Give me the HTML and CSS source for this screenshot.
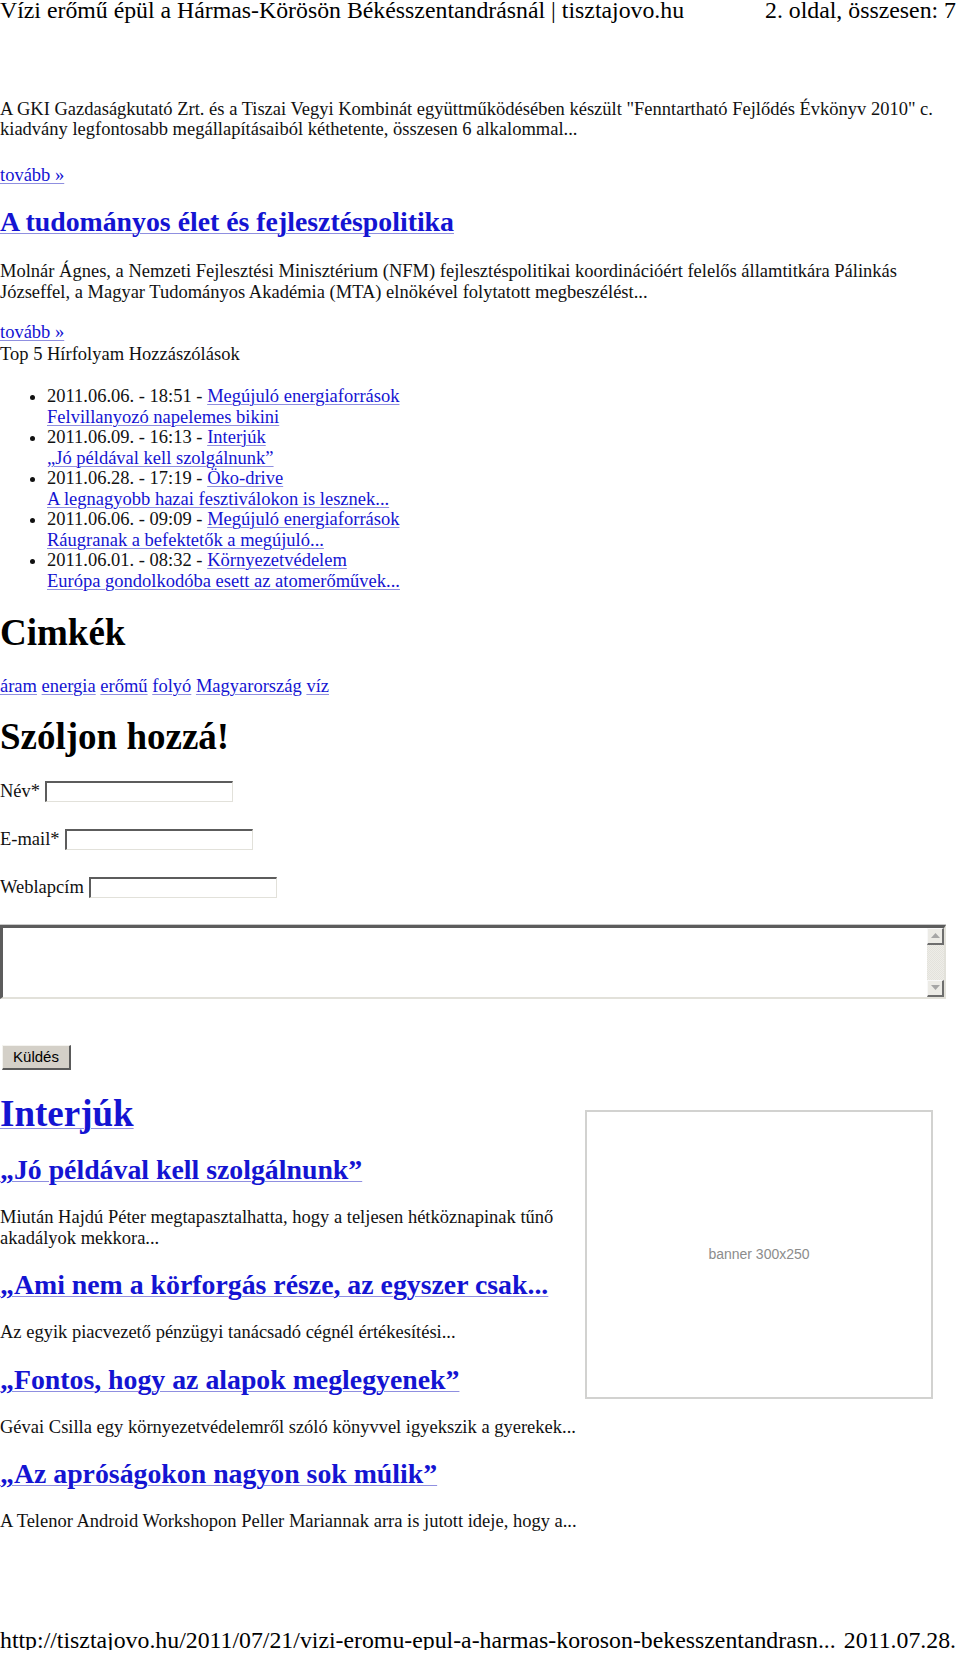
FILE: index.html
```html
<!DOCTYPE html>
<html lang="hu">
<head>
  <meta charset="UTF-8" />
  <title>Vízi erőmű épül a Hármas-Körösön Békésszentandrásnál | tisztajovo.hu</title>
  <link rel="stylesheet" href="styles.css">
</head>
<body>
  <div class="page-head">
    <span>Vízi erőmű épül a Hármas-Körösön Békésszentandrásnál | tisztajovo.hu</span>
    <span>2. oldal, összesen: 7</span>
  </div>

  <div class="main">
    <p class="lead first">A GKI Gazdaságkutató Zrt. és a Tiszai Vegyi Kombinát együttműködésében készült "Fenntartható Fejlődés Évkönyv 2010" c. kiadvány legfontosabb megállapításaiból kéthetente, összesen 6 alkalommal...</p>
    <p class="more more-1"><a href="#">tovább »</a></p>

    <h2 class="post-title"><a href="#">A tudományos élet és fejlesztéspolitika</a></h2>
    <p class="lead second">Molnár Ágnes, a Nemzeti Fejlesztési Minisztérium (NFM) fejlesztéspolitikai koordinációért felelős államtitkára Pálinkás Józseffel, a Magyar Tudományos Akadémia (MTA) elnökével folytatott megbeszélést...</p>
    <p class="more more-2"><a href="#">tovább »</a></p>

    <div class="tabs">Top 5 Hírfolyam Hozzászólások</div>
    <ul class="top5">
      <li>2011.06.06. - 18:51 - <a href="#">Megújuló energiaforrások</a><br><a href="#">Felvillanyozó napelemes bikini</a></li>
      <li>2011.06.09. - 16:13 - <a href="#">Interjúk</a><br><a href="#">„Jó példával kell szolgálnunk”</a></li>
      <li>2011.06.28. - 17:19 - <a href="#">Öko-drive</a><br><a href="#">A legnagyobb hazai fesztiválokon is lesznek...</a></li>
      <li>2011.06.06. - 09:09 - <a href="#">Megújuló energiaforrások</a><br><a href="#">Ráugranak a befektetők a megújuló...</a></li>
      <li>2011.06.01. - 08:32 - <a href="#">Környezetvédelem</a><br><a href="#">Európa gondolkodóba esett az atomerőművek...</a></li>
    </ul>

    <h1 class="block-title tags-title">Cimkék</h1>
    <p class="tags">
      <a href="#">áram</a> <a href="#">energia</a> <a href="#">erőmű</a> <a href="#">folyó</a> <a href="#">Magyarország</a> <a href="#">víz</a>
    </p>

    <h1 class="block-title comment-title">Szóljon hozzá!</h1>
    <form class="comment-form">
      <label class="field">Név* <input type="text" class="field-input"></label>
      <label class="field">E-mail* <input type="text" class="field-input"></label>
      <label class="field">Weblapcím <input type="text" class="field-input"></label>

      <div class="textbox">
        <textarea class="textbox-area"></textarea>
        <div class="scrollbar">
          <span class="scroll-btn">
            <svg width="9" height="5" viewBox="0 0 9 5"><polygon points="0,5 9,5 4.5,0" fill="#a6a6a6"/></svg>
          </span>
          <span class="scroll-track"></span>
          <span class="scroll-btn">
            <svg width="9" height="5" viewBox="0 0 9 5"><polygon points="0,0 9,0 4.5,5" fill="#a6a6a6"/></svg>
          </span>
        </div>
      </div>

      <button type="button" class="send">Küldés</button>
    </form>

    <div class="interviews">
      <div class="interview-list">
        <h1 class="block-title"><a href="#">Interjúk</a></h1>

        <h2 class="post-title lead-item"><a href="#">„Jó példával kell szolgálnunk”</a></h2>
        <p class="excerpt">Miután Hajdú Péter megtapasztalhatta, hogy a teljesen hétköznapinak tűnő akadályok mekkora...</p>

        <h2 class="post-title"><a href="#">„Ami nem a körforgás része, az egyszer csak...</a></h2>
        <p class="excerpt">Az egyik piacvezető pénzügyi tanácsadó cégnél értékesítési...</p>

        <h2 class="post-title"><a href="#">„Fontos, hogy az alapok meglegyenek”</a></h2>
        <p class="excerpt">Gévai Csilla egy környezetvédelemről szóló könyvvel igyekszik a gyerekek...</p>

        <h2 class="post-title"><a href="#">„Az apróságokon nagyon sok múlik”</a></h2>
        <p class="excerpt">A Telenor Android Workshopon Peller Mariannak arra is jutott ideje, hogy a...</p>
      </div>
      <div class="banner">banner 300x250</div>
    </div>
  </div>

  <div class="page-foot">
    <span>http://tisztajovo.hu/2011/07/21/vizi-eromu-epul-a-harmas-koroson-bekesszentandrasn...</span>
    <span>2011.07.28.</span>
  </div>
</body>
</html>
```

FILE: styles.css
```css
:root {
  --text: #111;
  --link: #1414d2;
  --link-line: #8f8fe0;
  --field-dark: #5c5c5c;
  --field-light: #e2e1da;
  --btn-face: #d4d0c8;
}

* {
  box-sizing: border-box;
  margin: 0;
  padding: 0;
}

body {
  font-family: "Liberation Serif", "Times New Roman", serif;
  font-size: 18.5px;
  line-height: 20.5px;
  color: var(--text);
  background: #fff;
  width: 960px;
}

a {
  color: var(--link);
  text-decoration: underline;
  text-decoration-color: var(--link-line);
  text-decoration-thickness: 1px;
  text-underline-offset: 2px;
}

/* page header / footer of the printed sheet */
.page-head,
.page-foot {
  display: flex;
  justify-content: space-between;
  font-size: 23.8px;
  line-height: 20px;
  padding-right: 4px;
  color: #000;
}
.page-foot { margin-top: 98px; }

.main { width: 946px; }

.lead.first { margin-top: 78.5px; }
.more-1 { margin-top: 25.5px; }
.more-2 { margin-top: 20px; }
.lead.second { margin-top: 23.5px; }

.post-title {
  font-size: 27.8px;
  line-height: 32px;
  font-weight: bold;
}
.main > .post-title { margin-top: 20px; }

.tabs { margin-top: 1.5px; }

.top5 {
  list-style: disc;
  padding-left: 47px;
  margin-top: 21.5px;
}

.block-title {
  font-size: 37px;
  line-height: 42px;
  font-weight: bold;
  color: #000;
}
.tags-title { margin-top: 21px; }
.tags { margin-top: 21.5px; }
.comment-title { margin-top: 19.5px; }

/* comment form */
.comment-form { margin-top: 23px; }

.field {
  display: flex;
  align-items: center;
  gap: 5px;
  height: 21px;
  margin-bottom: 27px;
}

.field-input {
  width: 188px;
  height: 21px;
  border-style: solid;
  border-width: 2px 1px 1px 2px;
  border-color: var(--field-dark) var(--field-light) var(--field-light) var(--field-dark);
  background: #fff;
}

.textbox {
  display: flex;
  width: 946px;
  height: 74px;
  border-style: solid;
  border-width: 3px 2px 2px 3px;
  border-color: var(--field-dark) var(--field-light) var(--field-light) var(--field-dark);
  box-shadow: 0 -1px 0 #c9c9c9;
}

.textbox-area {
  flex: 1;
  border: 0;
  resize: none;
  outline: none;
  background: #fff;
}

.scrollbar {
  width: 17px;
  display: flex;
  flex-direction: column;
  background-color: #eeede8;
  background-image: linear-gradient(45deg, #e3e2dc 25%, transparent 25%, transparent 75%, #e3e2dc 75%),
                    linear-gradient(45deg, #e3e2dc 25%, transparent 25%, transparent 75%, #e3e2dc 75%);
  background-size: 2px 2px;
  background-position: 0 0, 1px 1px;
}

.scroll-btn {
  height: 17px;
  display: flex;
  align-items: center;
  justify-content: center;
  background: #ecebe6;
  border-style: solid;
  border-width: 1px 2px 2px 1px;
  border-color: #f8f8f8 #6e6e6e #6e6e6e #f8f8f8;
}
.scroll-track { flex: 1; }

.send {
  display: block;
  margin-top: 46px;
  margin-left: 2px;
  width: 69px;
  height: 25px;
  font-family: "Liberation Sans", Arial, sans-serif;
  font-size: 15px;
  color: #000;
  background: var(--btn-face);
  border-style: solid;
  border-width: 1px 2px 2px 1px;
  border-color: #f4f3ef #5a5a5a #5a5a5a #f4f3ef;
}

/* interviews + banner */
.interviews {
  display: flex;
  gap: 2px;
  align-items: flex-start;
  margin-top: 23px;
}

.interview-list { width: 583px; }
.interview-list .post-title { margin-top: 21px; }
.interview-list .lead-item { margin-top: 19.5px; }
.excerpt { margin-top: 21px; }

.banner {
  width: 348px;
  height: 289px;
  margin-top: 17px;
  border: 2px solid #d2d2d0;
  display: flex;
  align-items: center;
  justify-content: center;
  font-family: "Liberation Sans", Arial, sans-serif;
  font-size: 14px;
  color: #8c8c8c;
}
```
